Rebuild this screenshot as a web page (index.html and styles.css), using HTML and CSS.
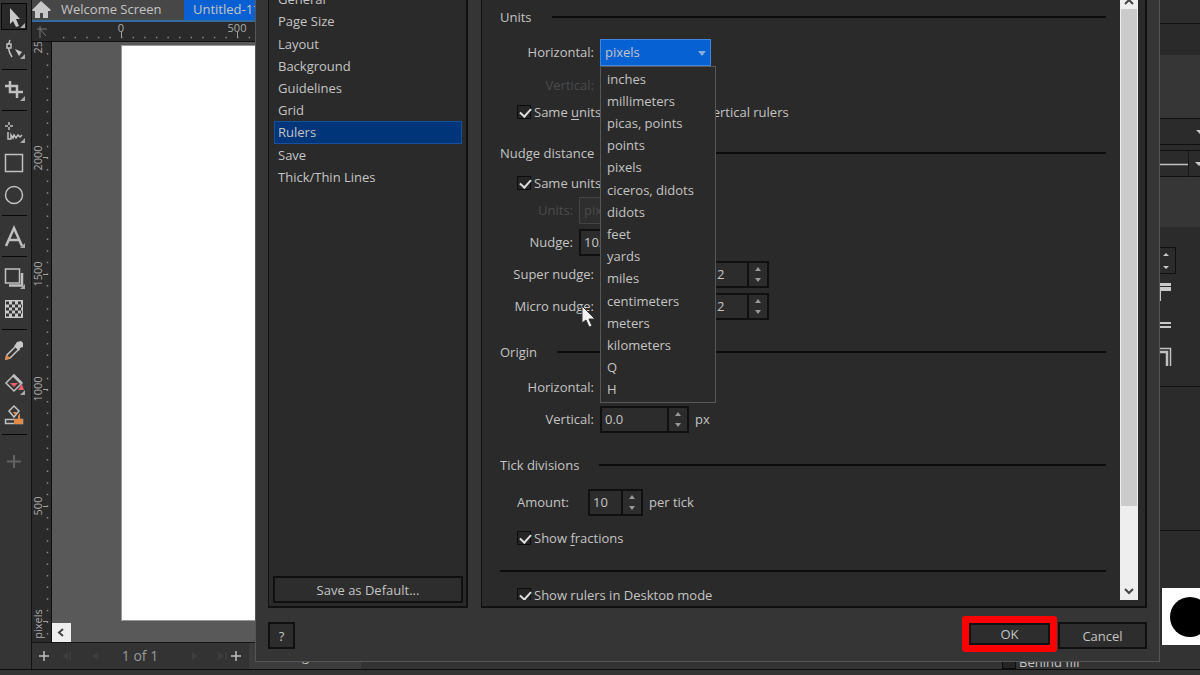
FILE: index.html
```html
<!DOCTYPE html>
<html lang="en">
<head>
<meta charset="utf-8">
<title>Options - Rulers</title>
<link rel="stylesheet" href="styles.css">
</head>
<body>
<div class="app">
  <div class="workspace">
    <nav class="toolbar" aria-label="Toolbox">
      <button class="tool tool-active" aria-label="Pick"><svg viewBox="0 0 28 32"><path class="fill" d="M10 7v16l3-3 3 6 3-1-3-7h4z"/><path class="flyout" d="M25 22v5h-5z"/></svg></button>
      <button class="tool" aria-label="Shape"><svg viewBox="0 0 28 32"><path class="line" d="M10 7q-4 8 2 17"/><rect class="line dark" x="7" y="11" width="4" height="4"/><path class="fill" d="M15 16l7 3-3 4z"/><path class="flyout" d="M25 21v5h-5z"/></svg></button>
      <hr class="tool-rule">
      <button class="tool" aria-label="Crop"><svg viewBox="0 0 28 32"><path class="line thick" d="M5 12h12v12M10 7v11h13"/><path class="flyout" d="M25 22v5h-5z"/></svg></button>
      <hr class="tool-rule">
      <button class="tool" aria-label="Freehand"><svg viewBox="0 0 28 32"><path class="line" d="M9 7v3M9 12v3M5 11h3M10 11h3M8 17v7h3v-4l2 3 1-3 2 3 2-3 2 2 2-2"/><path class="flyout" d="M25 23v5h-5z"/></svg></button>
      <button class="tool" aria-label="Rectangle"><svg viewBox="0 0 28 32"><rect class="line" x="5.5" y="7.5" width="17" height="17"/></svg></button>
      <button class="tool" aria-label="Ellipse"><svg viewBox="0 0 28 32"><circle class="line" cx="14" cy="16" r="8.5"/></svg></button>
      <hr class="tool-rule">
      <button class="tool" aria-label="Text"><svg viewBox="0 0 28 32"><path class="line thick" d="M6 26l8-18 8 18M9 20h10"/><path class="flyout" d="M25 23v5h-5z"/></svg></button>
      <hr class="tool-rule">
      <button class="tool" aria-label="Drop shadow"><svg viewBox="0 0 28 32"><path class="line thick" d="M9 24.500h13V12"/><rect class="line dark" x="5.5" y="8" width="14" height="14"/><path class="flyout" d="M25 23v5h-5z"/></svg></button>
      <button class="tool" aria-label="Transparency"><svg viewBox="0 0 28 32"><rect class="fill" x="5" y="7" width="18" height="18"/><path class="checks" d="M6 10h16M6 16h16M6 22h16"/><path class="checks" d="M9 13h13M9 19h13"/></svg></button>
      <hr class="tool-rule">
      <button class="tool" aria-label="Eyedropper"><svg viewBox="0 0 28 32"><path class="line" d="M6 25l1-4 9-9 3 3-9 9z"/><path class="orange" d="M5 26l1-5 5 3z"/><path class="fill" d="M15 11l2-3 4-1 2 2v4l-3 1-1 3-5-5z"/></svg></button>
      <button class="tool" aria-label="Interactive fill"><svg viewBox="0 0 28 32"><path class="line" d="M14 9l8 8-8 8-8-8z"/><path class="line thick" d="M13 9l8 8"/><path class="red" d="M10 17h8l-4 4zM18 24l4-6 2 6z"/><path class="flyout" d="M25 24v5h-5z"/></svg></button>
      <button class="tool" aria-label="Smart fill"><svg viewBox="0 0 28 32"><path class="line" d="M14 8l5 5-5 6-5-6zM5.500 21.500h17v4h-17z"/><path class="orange" d="M13 14h4l-2 3zM18 18l2-3v6h-2zM14 21h9v5h-9z"/></svg></button>
      <hr class="tool-rule">
      <button class="tool tool-last" aria-label="Customize"><svg viewBox="0 0 28 32"><path class="line thick faint" d="M14 10v13M7 16.500h14"/></svg></button>
    </nav>

    <main class="document">
      <div class="tabs">
        <a class="home" href="#" aria-label="Home"><svg viewBox="0 0 20 20"><path class="fill" d="M9 1L0 10l1 1h2v7h5v-5h3v5h5v-7h2l1-1z"/></svg></a>
        <a class="tab" href="#">Welcome Screen</a>
        <a class="tab tab-active" href="#">Untitled-1*</a>
      </div>
      <div class="ruler-row">
        <svg class="ruler-corner" viewBox="0 0 20 19"><path d="M5 7h10M8 4v12M8 7l6 7" fill="none" stroke="#777"/></svg>
        <svg class="ruler-top">
          <path class="dots" d="M11 15.500H203"/><path class="ticks" d="M69.500 10v6M185.500 10v6"/>
          <text x="69" y="10">0</text><text x="185" y="10">500</text>
        </svg>
      </div>
      <div class="canvas-row">
        <svg class="ruler-left">
          <path class="dots" d="M15.500 11V600"/><path class="ticks" d="M11 115.500h5M11 232.500h5M11 347.500h5M11 464.500h5M11 579.500h5"/>
          <text transform="translate(10 -1) rotate(-90)">2500</text>
          <text transform="translate(10 116) rotate(-90)">2000</text>
          <text transform="translate(10 232) rotate(-90)">1500</text>
          <text transform="translate(10 347) rotate(-90)">1000</text>
          <text transform="translate(10 464) rotate(-90)">500</text>
          <text transform="translate(10 582) rotate(-90)">pixels</text>
        </svg>
        <div class="canvas">
          <div class="page"></div>
          <button class="scroll-left" aria-label="Scroll left"><svg viewBox="0 0 19 19"><path d="M11 6L7 9.500l4 3.500" fill="none" stroke="#444" stroke-width="2"/></svg></button>
        </div>
      </div>
      <div class="page-nav">
        <button class="add" aria-label="Add page before"><svg viewBox="0 0 12 12"><path class="line" d="M6 1v10M1 6h10"/></svg></button>
        <button class="skip" aria-label="First page" disabled><svg viewBox="0 0 40 8"><path d="M6 0v8L0 4zM7 0h2v8H7zM36 0v8l-6-4z"/></svg></button>
        <span class="page-count">1 of 1</span>
        <button class="skip" aria-label="Last page" disabled><svg viewBox="0 0 40 8"><path d="M4 0v8l6-4zM30 0v8l6-4zM37 0h2v8h-2z"/></svg></button>
        <button class="add" aria-label="Add page after"><svg viewBox="0 0 12 12"><path class="line" d="M6 1v10M1 6h10"/></svg></button>
        <span class="page-tab">Page 1</span>
      </div>
    </main>

    <aside class="docker">
      <div class="docker-top"></div>
      <div class="docker-band"></div>
      <div class="docker-field"><svg viewBox="0 0 40 26"><path class="fill" d="M36 11h8l-4 4z"/></svg></div>
      <div class="docker-field"><svg viewBox="0 0 40 26"><path class="line" d="M0 13.500h28"/><path d="M28.500 0v26" stroke="#151515"/><path class="fill" d="M35 11h8l-4 4z"/></svg></div>
      <div class="docker-band docker-band-low"></div>
      <div class="docker-options">
        <svg viewBox="0 0 40 160">
          <path d="M0 20.500h15.500v26H0" fill="none" stroke="#101010"/>
          <path class="fill" d="M3 29l3-3 3 3zM3 39l3 3 3-3z"/>
          <path class="fill" d="M0 56h11v3H0zM0 60h11v4H1v10H0zM0 95h11v2H0zM0 99h11v2H0z"/>
          <path class="line" d="M0 121.500h10.500V139"/><path class="line thick" d="M0 125h7v14"/>
        </svg>
      </div>
      <div class="docker-gap"></div>
      <div class="swatch"><svg viewBox="0 0 38 57"><circle cx="28" cy="29" r="20"/></svg></div>
      <label class="behind"><input class="check" type="checkbox"><span><u>B</u>ehind fill</span></label>
    </aside>
  </div>
  <footer class="app-foot"></footer>
</div>

<section class="dialog" role="dialog" aria-label="Options">
  <div class="dialog-body">
    <div class="categories">
      <ul class="category-list">
        <li>General</li><li>Page Size</li><li>Layout</li><li>Background</li><li>Guidelines</li><li>Grid</li><li class="selected">Rulers</li><li>Save</li><li>Thick/Thin Lines</li>
      </ul>
      <button class="btn save-default">Save as Default...</button>
    </div>
    <div class="panel">
      <form class="form">
        <h2 class="heading">Units</h2>
        <div class="row">
          <label class="label" for="unit-h">Horizontal:</label>
          <div class="combo">
            <select id="unit-h" class="select"><option>pixels</option></select>
            <svg class="combo-arrow" viewBox="0 0 8 5"><path d="M0 0h8L4 5z"/></svg>
            <ul class="menu" role="listbox" aria-label="Horizontal units">
              <li>inches</li><li>millimeters</li><li>picas, points</li><li>points</li><li>pixels</li><li>ciceros, didots</li><li>didots</li><li>feet</li><li>yards</li><li>miles</li><li>centimeters</li><li>meters</li><li>kilometers</li><li>Q</li><li>H</li>
            </ul>
          </div>
        </div>
        <div class="row row-tall"><span class="label disabled">Vertical:</span></div>
        <label class="check-row"><input class="check" type="checkbox" checked><span>Same <u>u</u>nits</span><span class="check-tail">vertical rulers</span></label>

        <h2 class="heading">Nudge distance</h2>
        <label class="check-row"><input class="check" type="checkbox" checked><span>Same units</span></label>
        <div class="row row-narrow"><label class="label disabled" for="nudge-unit">Units:</label><select id="nudge-unit" class="select select-off" disabled><option>pixels</option></select></div>
        <div class="row row-narrow"><label class="label" for="nudge">Nudge:</label><span class="spin"><input id="nudge" class="spin-input" value="10.0"></span></div>
        <div class="row row-factor"><label class="label" for="super">Super nudge:</label><span class="spin spin-factor"><input id="super" class="spin-input" value="2"><span class="steps"><button type="button" class="step up" aria-label="Increase"></button><button type="button" class="step down" aria-label="Decrease"></button></span></span></div>
        <div class="row row-factor"><label class="label" for="micro">Micro nudge:</label><span class="spin spin-factor"><input id="micro" class="spin-input" value="2"><span class="steps"><button type="button" class="step up" aria-label="Increase"></button><button type="button" class="step down" aria-label="Decrease"></button></span></span></div>

        <h2 class="heading">Origin</h2>
        <div class="row"><span class="label">Horizontal:</span></div>
        <div class="row"><label class="label" for="origin-v">Vertical:</label><span class="spin spin-wide"><input id="origin-v" class="spin-input" value="0.0"><span class="steps"><button type="button" class="step up" aria-label="Increase"></button><button type="button" class="step down" aria-label="Decrease"></button></span></span><span>px</span></div>

        <h2 class="heading">Tick divisions</h2>
        <div class="row row-tick"><label class="label" for="amount">Amount:</label><span class="spin"><input id="amount" class="spin-input" value="10"><span class="steps"><button type="button" class="step up" aria-label="Increase"></button><button type="button" class="step down" aria-label="Decrease"></button></span></span><span>per tick</span></div>
        <label class="check-row check-spaced"><input class="check" type="checkbox" checked><span>Show <u>f</u>ractions</span></label>
        <hr class="divider">
        <label class="check-row"><input class="check" type="checkbox" checked><span>Show rulers in Desktop mode</span></label>
      </form>
      <div class="scrollbar">
        <svg class="scroll-end scroll-up" viewBox="0 0 18 9"><path d="M5 4l4-4 4 4"/></svg>
        <div class="thumb"></div>
        <svg class="scroll-end" viewBox="0 0 18 18"><path d="M5 7l4 4 4-4"/></svg>
      </div>
    </div>
  </div>
  <div class="dialog-foot">
    <button class="btn btn-help" aria-label="Help">?</button>
    <button class="btn btn-ok">OK</button>
    <button class="btn btn-cancel">Cancel</button>
  </div>
</section>
<svg class="cursor" viewBox="0 0 16 24"><path d="M1 1v17l4-3 3 7 3-1-3-7h6z"/></svg>
</body>
</html>
```
FILE: styles.css
```css
* { box-sizing: border-box; }
body {
  margin: 0;
  height: 100vh;
  overflow: hidden;
  position: relative;
  background: #333;
  color: #c4c4c4;
  font: 13px/18px "Open Sans", "Noto Sans", sans-serif;
}
button, input, select { font: inherit; color: inherit; }
button { padding: 0; border: 0; background: none; }
ul { margin: 0; padding: 0; list-style: none; }
svg { display: block; }
a { color: inherit; text-decoration: none; }
.fill { fill: #c8c8c8; }
.line { fill: none; stroke: #c0c0c0; stroke-width: 1.5; }
.thick { stroke-width: 2.5; }
.dark { fill: #343434; }
.faint { stroke: #636363; stroke-width: 2; }
.orange { fill: #e58a48; }
.red { fill: #e9606c; }
.checks { stroke: #333; stroke-width: 3; stroke-dasharray: 3 3; }

.app { height: 100%; display: flex; flex-direction: column; }
.workspace { flex: 1; min-height: 0; display: grid; grid-template-columns: 32px 1fr 200px; }
.app-foot { height: 6px; border-top: 1px solid #0d0d0d; background: #333; }

.toolbar { padding: 1px 2px 0; background: #353535; border-right: 1px solid #101010; }
.tool { display: block; width: 28px; height: 32px; margin-left: -2px; }
.tool svg { width: 28px; height: 32px; }
.tool-active { display: flex; align-items: center; justify-content: center; width: 26px; height: 27px; margin: 2px 0 3px -1px; overflow: hidden; background: #292929; border: 1px solid #080808; }
.tool-active svg { flex: none; }
.tool-last { margin-top: 10px; }
.tool-rule { height: 1px; width: 25px; margin: 4px 0; border: 0; background: #080808; }
.flyout { fill: #aaa; }

.document { display: flex; flex-direction: column; min-width: 0; }
.tabs { display: flex; height: 22px; background: #474747; border-bottom: 2px solid #326b9d; }
.home { width: 20px; }
.home svg { width: 20px; height: 20px; }
.tab { padding: 0 9px; min-width: 132px; }
.tab-active { background: #0960d2; min-width: 120px; }
.ruler-row { display: flex; height: 20px; background: #2a2a2a; border-bottom: 1px solid #101010; }
.ruler-corner { width: 20px; height: 19px; }
.ruler-top { flex: 1; height: 19px; }
.ruler-top text, .ruler-left text { fill: #aaa; font-size: 11px; text-anchor: middle; }
.dots { stroke: #8a8a8a; stroke-width: 1.5; stroke-dasharray: 1.5 10.1; }
.ticks { stroke: #a0a0a0; }
.canvas-row { flex: 1; display: flex; min-height: 0; border-bottom: 1px solid #151515; }
.ruler-left { width: 20px; height: 100%; background: #2a2a2a; border-right: 1px solid #101010; }
.canvas { flex: 1; display: flex; padding: 3px 0 21px 69px; background: #595959; position: relative; }
.page { flex: 1; background: #fff; border: 1px solid #999; }
.scroll-left { position: absolute; left: 0; bottom: 0; width: 19px; height: 19px; background: #eee; }
.page-nav { display: flex; align-items: center; height: 26px; padding-left: 6px; background: #333; }
.add svg { width: 12px; height: 12px; }
.skip { width: 54px; padding: 0 0 0 12px; }
.skip svg { width: 40px; height: 8px; fill: #3d3d3d; }
.page-count { width: 72px; text-align: center; font-size: 14px; color: #999; }
.page-tab { margin-left: 7px; width: 112px; height: 26px; padding-left: 38px; line-height: 26px; background: #3c3c3c; }

.docker { display: flex; flex-direction: column; align-items: flex-end; background: #2b2b2b; }
.docker > div { width: 40px; }
.docker-top { height: 55px; background: linear-gradient(#2d2d2d 23px, #101010 23px, #101010 24px, #2a2a2a 24px); }
.docker-band { height: 63px; background: #363636; }
.docker-band-low { height: 50px; }
.docker-field { height: 27px; border: solid #101010; border-width: 1px 0; }
.docker-field + .docker-field { margin-top: 5px; }
.docker-options { height: 160px; border-bottom: 1px solid #101010; }
.docker-gap { height: 144px; border-bottom: 1px solid #101010; }
.docker-options svg, .docker-field svg { width: 40px; }
.docker .swatch { width: 38px; height: 57px; margin-top: auto; background: #fff; }
.behind { display: flex; width: 200px; height: 24px; gap: 3px; padding: 10px 0 0 2px; align-items: center; background: #333; }

.dialog {
  position: absolute; inset: 0 40px 13px 255px;
  display: flex; flex-direction: column;
  padding: 0 12px 12px;
  background: #353535;
  border: solid #555; border-width: 0 1px 1px;
}
.dialog-body { flex: 1; min-height: 0; display: flex; gap: 13px; }
.categories { width: 200px; display: flex; flex-direction: column; justify-content: space-between; padding: 0 3px 3px 4px; background: #2a2a2a; border: solid #101010; border-width: 0 2px 2px 1px; overflow: hidden; }
.category-list { display: grid; grid-auto-rows: 1fr; height: 200px; margin: -12px 1px 0; }
.category-list li { display: flex; align-items: center; padding-left: 3px; border: 1px solid transparent; }
.category-list .selected { background: #00357a; border-color: #15509c; }
.btn { border: 2px solid #101010; background: #2d2d2d; height: 27px; }
.panel { flex: 1; display: flex; padding: 0 7px 6px 18px; background: #2a2a2a; border: solid #101010; border-width: 0 2px 2px 1px; min-width: 0; }
.form { flex: 1; padding-top: 6px; padding-right: 14px; overflow: hidden; }
.heading { display: flex; align-items: center; gap: 20px; height: 22px; margin: 19px 0 8px; font: inherit; }
.heading:first-child { margin-top: 0; }
.heading::after { content: ""; flex: 1; height: 2px; background: #0c0c0c; }
.row { display: flex; align-items: center; gap: 6px; height: 32px; }
.row-tall { height: 33px; }
.label { width: 94px; text-align: right; white-space: nowrap; }
.row-narrow .label { width: 73px; }
.row-factor { gap: 118px; }
.row-tick { margin-top: 10px; }
.row-tick .label { width: 82px; padding-right: 13px; }
.disabled { color: #4b4b4b; }
.check-row { display: flex; align-items: center; gap: 3px; height: 22px; padding-left: 17px; white-space: nowrap; }
.check-tail { margin-left: 102px; }
.check-spaced { margin-top: 9px; }
.divider { height: 2px; margin: 21px 0 12px; border: 0; background: #0c0c0c; }
u { text-underline-offset: 2px; }
.check { appearance: none; flex: none; width: 14px; height: 14px; margin: 0; border: 1px solid #0c0c0c; background: #252525; position: relative; }
.check:checked::after { content: ""; position: absolute; left: 4px; top: 0; width: 5px; height: 9px; border: solid #ddd; border-width: 0 2px 2px 0; transform: rotate(42deg); }
.combo { position: relative; width: 111px; }
.select { display: block; appearance: none; width: 100%; height: 27px; padding: 0 4px; border: 1px solid #3f86dd; border-radius: 0; background: #0661d2; }
.select-off { width: 111px; color: #494949; background: #2e2e2e; border-color: #444; opacity: 1; }
.combo-arrow { position: absolute; right: 5px; top: 12px; width: 8px; height: 5px; fill: #86aedd; }
.menu { position: absolute; z-index: 2; left: 0; top: 27px; width: 116px; height: 337px; padding: 1px 0; display: grid; grid-auto-rows: 1fr; background: #2a2a2a; border: 1px solid #585858; }
.menu li { display: flex; align-items: center; padding-left: 6px; }
.spin { display: flex; width: 55px; height: 27px; border: 2px solid #101010; background: #2c2c2c; }
.spin-wide { width: 89px; }
.spin-factor { width: 57px; }
.spin-input { flex: 1; min-width: 0; width: 0; padding: 0 3px; border: 0; background: none; }
.steps { width: 20px; display: flex; flex-direction: column; justify-content: space-between; align-items: center; padding: 4px 0; border-left: 2px solid #101010; }
.step { width: 0; height: 0; border: solid transparent; border-width: 0 3px; }
.up { border-bottom: 4px solid #999; }
.down { border-top: 4px solid #999; }
.scrollbar { width: 18px; display: flex; flex-direction: column; background: #eee; }
.thumb { height: 497px; background: #cbcbcb; margin: 0 1px auto; }
.scroll-end { width: 18px; height: 18px; fill: none; stroke: #444; stroke-width: 2; }
.scroll-up { height: 9px; }

.dialog-foot { display: flex; align-items: flex-start; padding-top: 14px; }
.btn-help { width: 27px; margin-right: auto; }
.btn-ok { width: 95px; height: 36px; margin: -6px 1px -3px 0; border: 7px solid #fe0000; border-radius: 3px; box-shadow: inset 0 0 0 2px #101010; }
.btn-cancel { width: 89px; }
.cursor { position: absolute; left: 581px; top: 305px; width: 16px; height: 24px; fill: #f2f2f2; stroke: #333; stroke-width: 1; z-index: 3; }
```
